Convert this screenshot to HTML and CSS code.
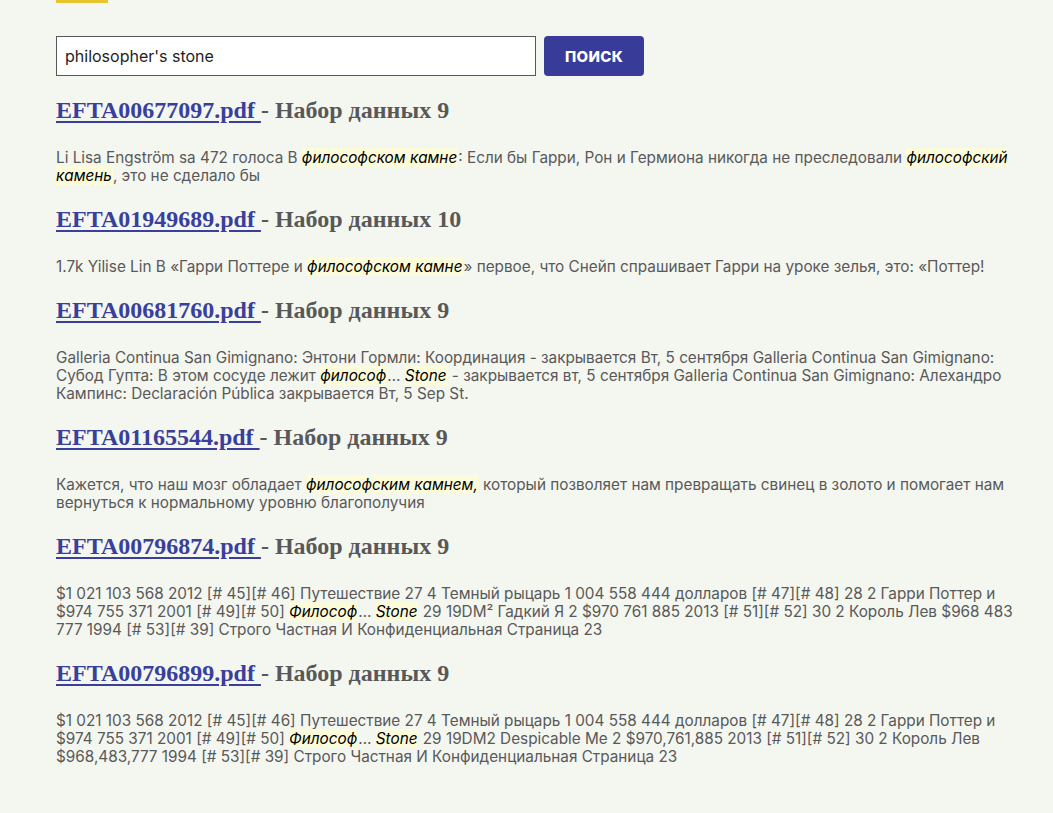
FILE: index.html
```html
<!DOCTYPE html>
<html lang="ru">
<head>
<meta charset="utf-8">
<title>Поиск</title>
<link rel="stylesheet" href="styles.css">
</head>
<body>
<div class="page">
  <div class="topbar"></div>
  <form class="search">
    <input class="search-input" type="text" value="philosopher's stone">
    <button class="search-btn" type="button">ПОИСК</button>
  </form>
  <div class="results">
    <div class="result">
      <h2 class="result-title"><a href="#">EFTA00677097.pdf </a>- Набор данных 9</h2>
      <p class="snippet">Li Lisa Engström sa 472 голоса В <mark>философском камне</mark>: Если бы Гарри, Рон и Гермиона никогда не преследовали <mark>философский камень</mark>, это не сделало бы</p>
    </div>
    <div class="result">
      <h2 class="result-title"><a href="#">EFTA01949689.pdf </a>- Набор данных 10</h2>
      <p class="snippet">1.7k Yilise Lin В «Гарри Поттере и <mark>философском камне</mark>» первое, что Снейп спрашивает Гарри на уроке зелья, это: «Поттер!</p>
    </div>
    <div class="result">
      <h2 class="result-title"><a href="#">EFTA00681760.pdf </a>- Набор данных 9</h2>
      <p class="snippet">Galleria Continua San Gimignano: Энтони Гормли: Координация - закрывается Вт, 5 сентября Galleria Continua San Gimignano: Субод Гупта: В этом сосуде лежит <mark>философ</mark>… <mark>Stone</mark> - закрывается вт, 5 сентября Galleria Continua San Gimignano: Алехандро Кампинс: Declaración Pública закрывается Вт, 5 Sep St.</p>
    </div>
    <div class="result">
      <h2 class="result-title"><a href="#">EFTA01165544.pdf </a>- Набор данных 9</h2>
      <p class="snippet">Кажется, что наш мозг обладает <mark>философским камнем,</mark> который позволяет нам превращать свинец в золото и помогает нам вернуться к нормальному уровню благополучия</p>
    </div>
    <div class="result">
      <h2 class="result-title"><a href="#">EFTA00796874.pdf </a>- Набор данных 9</h2>
      <p class="snippet">$1 021 103 568 2012 [# 45][# 46] Путешествие 27 4 Темный рыцарь 1 004 558 444 долларов [# 47][# 48] 28 2 Гарри Поттер и $974 755 371 2001 [# 49][# 50] <mark>Философ</mark>… <mark>Stone</mark> 29 19DM² Гадкий Я 2 $970 761 885 2013 [# 51][# 52] 30 2 Король Лев $968 483 777 1994 [# 53][# 39] Строго Частная И Конфиденциальная Страница 23</p>
    </div>
    <div class="result">
      <h2 class="result-title"><a href="#">EFTA00796899.pdf </a>- Набор данных 9</h2>
      <p class="snippet">$1 021 103 568 2012 [# 45][# 46] Путешествие 27 4 Темный рыцарь 1 004 558 444 долларов [# 47][# 48] 28 2 Гарри Поттер и $974 755 371 2001 [# 49][# 50] <mark>Философ</mark>… <mark>Stone</mark> 29 19DM2 Despicable Me 2 $970,761,885 2013 [# 51][# 52] 30 2 Король Лев $968,483,777 1994 [# 53][# 39] Строго Частная И Конфиденциальная Страница 23</p>
    </div>
  </div>
</div>
</body>
</html>
```
FILE: styles.css
```css
html, body {
  margin: 0;
  padding: 0;
  background: #f4f6f0;
}
body {
  font-family: "Inter", "Noto Sans", sans-serif;
  color: #555555;
}
.page {
  padding: 0 28px 40px 56px;
}
.topbar {
  width: 52px;
  height: 3px;
  background: #e8c52c;
}
.search {
  display: flex;
  gap: 8px;
  margin-top: 33px;
  align-items: stretch;
}
.search-input {
  box-sizing: border-box;
  width: 480px;
  height: 40px;
  margin: 0;
  padding: 0 8px;
  border: 1px solid #55575e;
  border-radius: 0;
  background: #ffffff;
  font-family: "Inter", "Noto Sans", sans-serif;
  font-size: 16px;
  color: #1e1e1e;
  outline: none;
}
.search-btn {
  box-sizing: border-box;
  width: 100px;
  height: 40px;
  margin: 0;
  border: none;
  border-radius: 4px;
  background: #383c98;
  color: #ffffff;
  font-family: "Inter", "Noto Sans", sans-serif;
  font-weight: 800;
  font-size: 15px;
  letter-spacing: 0.3px;
}
.results {
  margin-top: 19px;
}
.result-title {
  margin: 0;
  font-family: "Liberation Serif", "DejaVu Serif", serif;
  font-weight: 700;
  font-size: 24px;
  line-height: 30px;
  color: #585858;
}
.result-title a {
  color: #3a3f9c;
  text-decoration: underline;
  text-decoration-thickness: 2px;
  text-underline-offset: 3px;
}
.snippet {
  margin: 24px 0 19px;
  font-size: 15.3px;
  line-height: 18px;
  color: #595959;
}
.snippet mark {
  background: #fcfcdb;
  color: #000000;
  font-style: italic;
  padding: 0 1px 0 0;
}
```
